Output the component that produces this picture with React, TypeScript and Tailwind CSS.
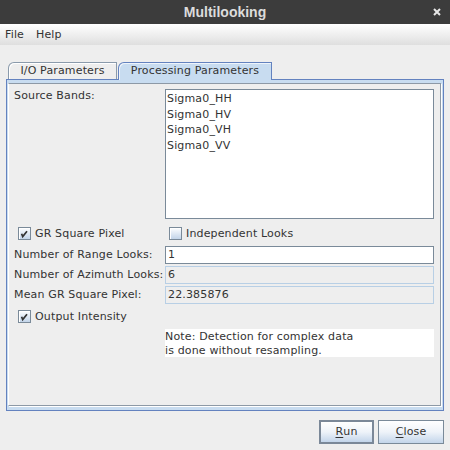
import React from 'react'

function CheckBox({ checked }: { checked?: boolean }) {
  return (
    <span className="flex h-[13px] w-[13px] shrink-0 border border-[#7a8a99] bg-linear-to-b from-[#fdfeff] to-[#c2d4e9] shadow-[inset_1px_1px_0_#fff]">
      {checked && (
        <svg width="11" height="11" viewBox="0 0 11 11">
          <path d="M2.6 5.8 L3.7 8.6 L8 3.2" fill="none" stroke="#333" strokeWidth="1.7" />
        </svg>
      )}
    </span>
  )
}

function Field({ value, enabled }: { value: string; enabled?: boolean }) {
  return (
    <div
      className={`flex h-[18px] items-center pl-[2px] ${
        enabled ? 'border border-[#7a8a99] bg-white' : 'border border-[#b8cfe5] bg-[#eeeeee]'
      }`}
    >
      {value}
    </div>
  )
}

function Button({ label, focused }: { label: string; focused?: boolean }) {
  return (
    <button
      className={`flex h-[24px] items-center justify-center bg-linear-to-b from-white via-[#eef3f9] to-[#c3d5ea] text-[#333] ${
        focused ? 'w-[55px] border-2 border-[#7b8898]' : 'w-[66px] border border-[#7a8a99]'
      }`}
    >
      <span className="underline underline-offset-2">{label[0]}</span>
      {label.slice(1)}
    </button>
  )
}

export default function App() {
  const bands = ['Sigma0_HH', 'Sigma0_HV', 'Sigma0_VH', 'Sigma0_VV']

  return (
    <div className="flex h-[450px] w-[450px] flex-col bg-[#eeeeee] font-['DejaVu_Sans',sans-serif] text-[11px] leading-[14px] tracking-[0.15px] text-[#333]">
      {/* Window title */}
      <div className="grid h-[24px] shrink-0 grid-cols-[1fr_auto_1fr] items-center bg-[#3c3c3c] tracking-normal">
        <div />
        <div className="font-['Liberation_Sans',Arial,sans-serif] text-[14px] font-bold text-[#dcdcdc]">
          Multilooking
        </div>
        <div className="flex justify-end pr-[9px]">
          <svg width="8" height="8" viewBox="0 0 8 8">
            <path d="M1 1 L7 7 M7 1 L1 7" stroke="#e8e8e8" strokeWidth="2" />
          </svg>
        </div>
      </div>

      {/* Menu bar */}
      <div className="flex h-[21px] shrink-0 items-center bg-linear-to-b from-white to-[#dfdfdf]">
        <span className="ml-[5px]">File</span>
        <span className="ml-[12px]">Help</span>
      </div>

      {/* Tabs */}
      <div className="mt-[17px] flex items-end pl-[8px]">
        <div className="flex h-[17px] w-[109px] items-center justify-center rounded-tl-[6px] border border-b-0 border-[#8a9aab] shadow-[inset_1px_1px_0_#fff]">
          I/O Parameters
        </div>
        <div className="relative z-10 -mb-px ml-px flex h-[18px] w-[154px] items-center justify-center rounded-tl-[6px] border border-b-0 border-[#6382bf] bg-[#c8dcf0] pb-px shadow-[inset_1px_1px_0_#eef4fb]">
          Processing Parameters
        </div>
      </div>

      {/* Tab content */}
      <div className="mx-[6px] flex h-[332px] flex-col border border-[#6382bf] bg-[#c8dcf0] pb-[4px] pl-px pr-[2px] pt-[3px]">
        <div className="flex-1 border border-l-white border-[#8d99a6] bg-[#eeeeee] pl-[5px] pr-[5px] pt-[5px] shadow-[1px_1px_0_#fff]">
          <div className="grid grid-cols-[151px_269px]">
            <div className="self-start">Source Bands:</div>
            <div className="h-[130px] border border-[#7a8a99] bg-white pl-px pt-px">
              {bands.map(b => (
                <div key={b} className="leading-[15.5px]">
                  {b}
                </div>
              ))}
            </div>

            <div className="mt-[4px] flex h-[21px] items-center gap-[4px] pl-[4px]">
              <CheckBox checked />
              <span>GR Square Pixel</span>
            </div>
            <div className="mt-[4px] flex h-[21px] items-center gap-[4px] pl-[4px]">
              <CheckBox />
              <span>Independent Looks</span>
            </div>

            <div className="mt-[2px] flex h-[18px] items-center">Number of Range Looks:</div>
            <div className="mt-[2px]">
              <Field value="1" enabled />
            </div>

            <div className="mt-[2px] flex h-[18px] items-center">Number of Azimuth Looks:</div>
            <div className="mt-[2px]">
              <Field value="6" />
            </div>

            <div className="mt-[2px] flex h-[18px] items-center">Mean GR Square Pixel:</div>
            <div className="mt-[2px]">
              <Field value="22.385876" />
            </div>

            <div className="mt-[2px] flex h-[21px] items-center gap-[4px] pl-[4px]">
              <CheckBox checked />
              <span>Output Intensity</span>
            </div>
            <div />

            <div />
            <div className="mt-[2px] h-[28px] bg-white pt-px leading-[13.5px]">
              <div>Note: Detection for complex data</div>
              <div>is done without resampling.</div>
            </div>
          </div>
        </div>
      </div>

      {/* Buttons */}
      <div className="mt-[9px] flex justify-end gap-[4px] pr-[6px]">
        <Button label="Run" focused />
        <Button label="Close" />
      </div>
    </div>
  )
}
